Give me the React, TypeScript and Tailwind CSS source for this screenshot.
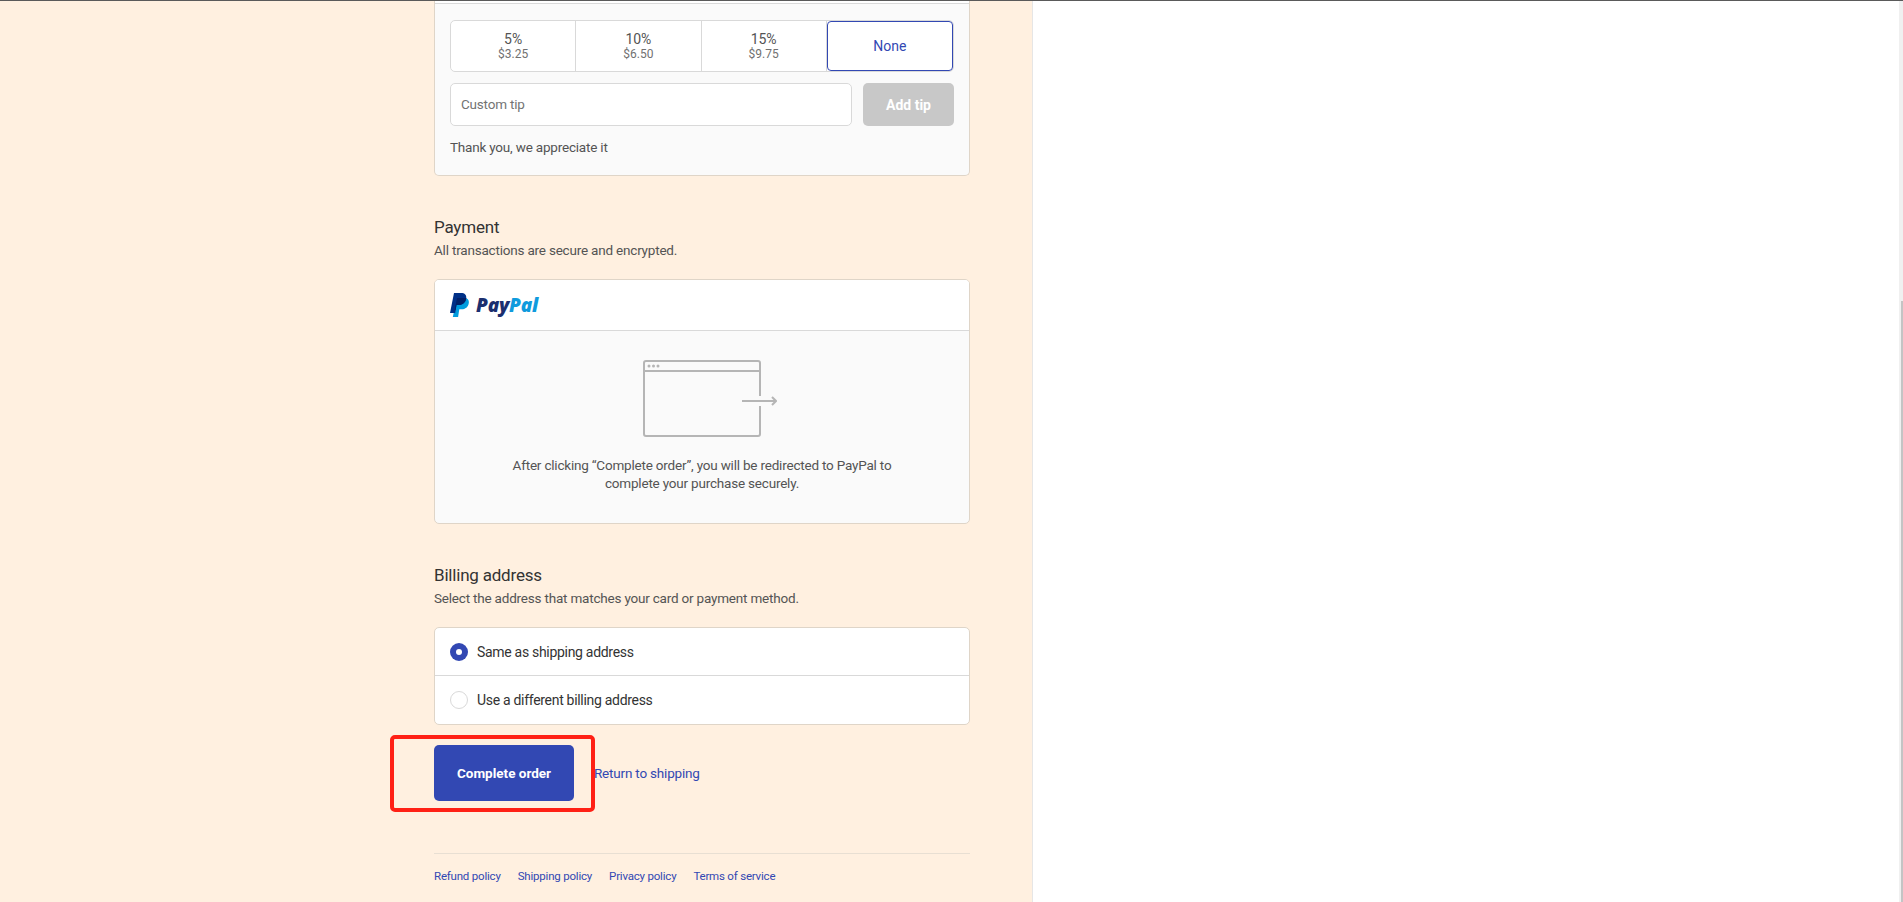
const font = "font-['Roboto','Noto_Sans',sans-serif]";
const body = 'text-[13.5px] tracking-[-0.2px]';

function TipOption({ pct, amount }: { pct: string; amount: string }) {
  return (
    <div className="flex-1 flex flex-col items-center justify-center border-r border-[#d9d9d9] last:border-r-0">
      <span className="text-sm leading-[16px] text-[#545454]">{pct}</span>
      <span className="text-xs leading-[15px] text-[#717171]">{amount}</span>
    </div>
  );
}

function PayPalLogo() {
  return (
    <div className="flex items-center gap-[7px]">
      <svg width="19" height="24" viewBox="0 0 19 24">
        <path d="M7 5h7c3.500 0 5.300 1.800 4.800 5-.6 4-3.400 6.300-7.300 6.300H9.300L8.100 24H2.800z" fill="#009cde" />
        <path d="M4 0h7c3.800 0 5.800 2 5.200 5.500-.7 4.100-3.500 6.500-7.500 6.500H6.500l-1.300 8H0z" fill="#003087" />
        <path d="M7 5h9.600c-.1.200-.2.300-.4.500-.7 4.100-3.500 6.500-7.500 6.500H6.500l-.9 5.200-.9-.2z" fill="#012169" />
      </svg>
      <span className="text-[19px] leading-[20px] font-extrabold italic tracking-[-0.2px] font-['Open_Sans',sans-serif]">
        <span className="text-[#1b2f6f]">Pay</span>
        <span className="text-[#0f9bdd]">Pal</span>
      </span>
    </div>
  );
}

function RedirectIcon() {
  return (
    <svg width="134" height="77" viewBox="0 0 134 77" fill="none" stroke="#b5b5b5" strokeWidth="2">
      <path d="M117 36V3a2 2 0 0 0-2-2H3a2 2 0 0 0-2 2v71a2 2 0 0 0 2 2h112a2 2 0 0 0 2-2V46" />
      <path d="M1 11h116" />
      <path d="M99 41h34" />
      <path d="M129 37l4 4-4 4" />
      <circle cx="6" cy="6" r="1.500" fill="#b5b5b5" stroke="none" />
      <circle cx="10.500" cy="6" r="1.500" fill="#b5b5b5" stroke="none" />
      <circle cx="15" cy="6" r="1.500" fill="#b5b5b5" stroke="none" />
    </svg>
  );
}

export default function App() {
  return (
    <div className={`relative h-[902px] w-full overflow-hidden flex flex-col bg-white ${font}`}>
      <div className="h-[1px] bg-[#5a5a5a] shrink-0" />
      <div className="flex flex-1 min-h-0">
        <main className="w-[1033px] shrink-0 bg-[#fff0e0] border-r border-[#e6e6e6] pl-[434px] pr-[62px]">
          {/* tip card, cut off by the top edge */}
          <section className="h-[175px] border border-t-0 border-[#dfd5c8] rounded-b-[5px] bg-[#fafafa] overflow-hidden">
            <div className="h-[2px] bg-white border-b border-[#d9d9d9] box-content" />
            <div className="px-[15px] pt-[16px]">
              <div className="flex h-[52px] rounded-[5px] border border-[#d9d9d9] bg-white">
                <TipOption pct="5%" amount="$3.25" />
                <TipOption pct="10%" amount="$6.50" />
                <TipOption pct="15%" amount="$9.75" />
                <div className="flex-1 flex items-center justify-center border border-[#3248b3] rounded-[4px] text-sm text-[#3248b3]">
                  None
                </div>
              </div>
              <div className="mt-[11px] flex gap-[11px]">
                <div className={`flex-1 h-[43px] rounded-[5px] border border-[#d9d9d9] bg-white px-[10px] flex items-center text-[#737373] ${body}`}>
                  Custom tip
                </div>
                <div className="w-[91px] h-[43px] rounded-[5px] bg-[#c8c8c8] flex items-center justify-center text-sm font-bold text-white">
                  Add tip
                </div>
              </div>
              <p className={`mt-[11px] leading-5 text-[#545454] ${body}`}>Thank you, we appreciate it</p>
            </div>
          </section>

          <section className="mt-[40px]">
            <h2 className="text-[17px] leading-[22px] tracking-[-0.2px] text-[#333]">Payment</h2>
            <p className={`mt-[2px] leading-5 text-[#545454] ${body}`}>All transactions are secure and encrypted.</p>
            <div className="mt-[19px] h-[245px] rounded-[5px] border border-[#dfd5c8] bg-[#fafafa] overflow-hidden">
              <div className="h-[50px] bg-white border-b border-[#d9d9d9] box-content px-[15px] flex items-center">
                <PayPalLogo />
              </div>
              <div className="flex flex-col items-center pt-[29px]">
                <div className="pl-[16px]">
                  <RedirectIcon />
                </div>
                <p className={`mt-[19px] w-[400px] text-center leading-[18px] text-[#545454] ${body}`}>
                  After clicking “Complete order”, you will be redirected to PayPal to complete your purchase securely.
                </p>
              </div>
            </div>
          </section>

          <section className="mt-[40px]">
            <h2 className="text-[17px] leading-[22px] tracking-[-0.2px] text-[#333]">Billing address</h2>
            <p className={`mt-[2px] leading-5 text-[#545454] ${body}`}>Select the address that matches your card or payment method.</p>
            <div className="mt-[19px] rounded-[5px] border border-[#dfd5c8] bg-white">
              <div className="h-[47px] px-[15px] flex items-center gap-[9px] border-b border-[#d9d9d9] box-content text-sm tracking-[-0.3px] text-[#333]">
                <span className="w-[18px] h-[18px] rounded-full bg-[#3248b3] flex items-center justify-center">
                  <span className="w-[6px] h-[6px] rounded-full bg-white" />
                </span>
                Same as shipping address
              </div>
              <div className="h-[48px] px-[15px] flex items-center gap-[9px] text-sm tracking-[-0.3px] text-[#333]">
                <span className="w-[18px] h-[18px] rounded-full border border-[#d9d9d9] bg-white" />
                Use a different billing address
              </div>
            </div>
          </section>

          <div className="mt-[20px] flex items-center gap-[20px]">
            <button className="w-[140px] h-[56px] rounded-[5px] bg-[#3248b3] text-[13.5px] font-bold text-white">
              Complete order
            </button>
            <a className={`pt-[1px] text-[#3248b3] ${body}`}>Return to shipping</a>
          </div>

          <footer className="mt-[52px] border-t border-[#e8dfd3] pt-[13px] flex gap-[17px] text-[11.5px] tracking-[-0.2px] leading-[18px] text-[#3248b3]">
            <a>Refund policy</a>
            <a>Shipping policy</a>
            <a>Privacy policy</a>
            <a>Terms of service</a>
          </footer>
        </main>
        <div className="flex-1" />
        <div className="w-[4px] shrink-0 bg-[#f0f0f0] flex flex-col justify-end">
          <div className="h-[601px] w-[2px] ml-[2px] bg-[#c4c4c4]" />
        </div>
      </div>
      {/* red annotation box from the screenshot */}
      <div className="absolute left-[390px] top-[735px] w-[205px] h-[77px] border-4 border-[#ff2015] rounded-[5px]" />
    </div>
  );
}
